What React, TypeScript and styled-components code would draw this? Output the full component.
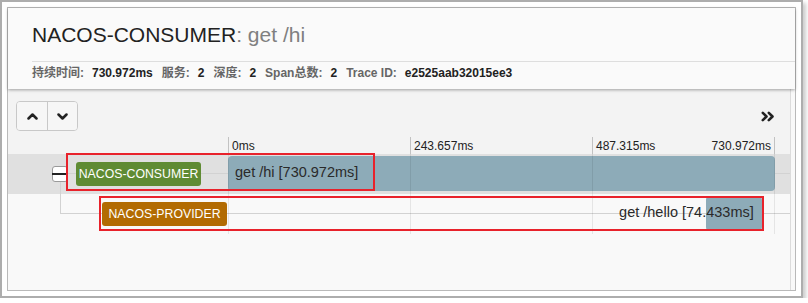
import styled, { createGlobalStyle } from 'styled-components';

const GlobalStyle = createGlobalStyle`
  body {
    margin: 0;
    background: #fff;
    font-family: "Liberation Sans", Arial, "Noto Sans CJK SC", sans-serif;
  }
`;

const TOTAL_MS = 730.972;

type Span = {
  service: string;
  color: string;
  name: string;
  start: number;
  duration: number;
  level: number;
  expandable: boolean;
  labelSide: 'left' | 'right';
};

const spans: Span[] = [
  { service: 'NACOS-CONSUMER', color: '#5f8b33', name: 'get /hi', start: 0, duration: 730.972, level: 0, expandable: true, labelSide: 'left' },
  { service: 'NACOS-PROVIDER', color: '#b26b02', name: 'get /hello', start: 638.8, duration: 74.433, level: 1, expandable: false, labelSide: 'right' },
];

const Frame = styled.div`
  box-sizing: border-box;
  width: 803px;
  height: 298px;
  border: 2px solid #adadad;
  padding: 5px;
  background: #fff;
  box-shadow: 3px 3px 4px rgba(0, 0, 0, 0.2);
`;

const Panel = styled.div`
  box-sizing: border-box;
  height: 100%;
  border: 1px solid #b9b9b9;
  background: #f9f9f9;
  display: flex;
  flex-direction: column;
`;

const Header = styled.header`
  position: relative;
  z-index: 2;
  padding: 15px 0 8px 24px;
  background: #fafafa;
  box-shadow: 0 1px 3px rgba(0, 0, 0, 0.35);
`;

const Title = styled.h1`
  margin: 0;
  font-size: 21px;
  line-height: 24px;
  font-weight: normal;
  color: #222;
`;

const Operation = styled.span`
  color: #808080;
`;

const MetaBar = styled.div`
  margin-top: 14px;
  padding-top: 3px;
  border-top: 1px solid #dedede;
  display: flex;
  gap: 9px;
  font-size: 12px;
  line-height: 16px;
  font-weight: bold;
`;

const MetaItem = styled.div`
  display: flex;
  gap: 8px;
`;

const MetaLabel = styled.span`
  color: #666;
`;

const MetaValue = styled.span`
  color: #222;
`;

const TraceView = styled.div`
  width: 782px;
  flex: 1;
  border-right: 1px solid #dcdcdc;
  display: flex;
  flex-direction: column;
`;

const Toolbar = styled.div`
  height: 48px;
  box-sizing: border-box;
  padding: 12px 15px 0 8px;
  background: #f3f3f3;
  display: flex;
  justify-content: space-between;
  align-items: flex-start;
`;

const ButtonGroup = styled.div`
  display: flex;
  border: 1px solid #c8c8c8;
  border-radius: 4px;
  overflow: hidden;
`;

const NavButton = styled.button`
  width: 30px;
  height: 28px;
  padding: 0;
  border: none;
  background: #f6f6f6;
  display: flex;
  align-items: center;
  justify-content: center;
  & + & {
    border-left: 1px solid #c8c8c8;
  }
`;

const ExpandAll = styled.div`
  height: 30px;
  display: flex;
  align-items: center;
`;

const TimeHeader = styled.div`
  height: 17px;
  background: #f3f3f3;
  display: grid;
  grid-template-columns: 220px 547px 15px;
`;

const Ticks = styled.div`
  display: flex;
`;

const TickCell = styled.div<{ $last?: boolean }>`
  flex: 1;
  box-sizing: border-box;
  border-left: 1px solid #c2c2c2;
  border-right: ${(p) => (p.$last ? '1px solid #c2c2c2' : 'none')};
  padding: 2px 3px 0 3px;
  display: flex;
  justify-content: space-between;
  font-size: 12px;
  line-height: 15px;
  color: #222;
`;

const Rows = styled.div`
  position: relative;
`;

const GridLines = styled.div`
  position: absolute;
  top: 0;
  bottom: 0;
  left: 220px;
  width: 547px;
  display: flex;
  pointer-events: none;
  z-index: 3;
`;

const GridCell = styled.div<{ $last?: boolean }>`
  flex: 1;
  border-left: 1px solid rgba(0, 0, 0, 0.08);
  border-right: ${(p) => (p.$last ? '1px solid rgba(0, 0, 0, 0.08)' : 'none')};
`;

const Row = styled.div<{ $shaded: boolean; $lineStart: number; $level: number }>`
  position: relative;
  height: 40px;
  display: grid;
  grid-template-columns: 220px 547px 15px;
  background: ${(p) => (p.$shaded ? '#e0e0e0' : '#f9f9f9')};

  &::before {
    content: '';
    position: absolute;
    left: ${(p) => p.$lineStart}px;
    right: 0;
    top: 19px;
    height: 1px;
    background: #d2d2d2;
  }

  &::after {
    content: '';
    display: ${(p) => (p.$level > 0 ? 'block' : 'none')};
    position: absolute;
    left: ${(p) => p.$lineStart}px;
    top: -12px;
    width: 1px;
    height: 32px;
    background: #d2d2d2;
  }
`;

const NameCell = styled.div<{ $indent: number }>`
  display: flex;
  align-items: center;
  gap: 8px;
  padding-left: ${(p) => p.$indent}px;
  padding-bottom: 1px;
`;

const Toggle = styled.div`
  position: relative;
  box-sizing: border-box;
  width: 16px;
  height: 16px;
  border: 1px solid #9a9a9a;
  border-radius: 3px;
  background: #fff;
  &::after {
    content: '';
    position: absolute;
    left: -1px;
    right: -1px;
    top: 6px;
    height: 2px;
    background: #222;
  }
`;

const ToggleSpacer = styled.div`
  width: 16px;
  height: 16px;
`;

const ServiceBadge = styled.span<{ $color: string }>`
  position: relative;
  width: 125px;
  height: 24px;
  border-radius: 3px;
  background: ${(p) => p.$color};
  color: #fff;
  font-size: 12.3px;
  line-height: 24px;
  text-align: center;
  white-space: nowrap;
`;

const BarCell = styled.div`
  position: relative;
`;

const Bar = styled.div`
  position: absolute;
  top: 2px;
  height: 35px;
  border-radius: 4px;
  background: #8dabb8;
`;

const BarLabel = styled.span`
  position: absolute;
  top: 0;
  height: 38px;
  line-height: 36px;
  font-size: 14.5px;
  color: #2a2a2a;
  white-space: nowrap;
`;

const Annotation = styled.div<{ $x: number; $y: number; $w: number; $h: number }>`
  position: absolute;
  left: ${(p) => p.$x}px;
  top: ${(p) => p.$y}px;
  width: ${(p) => p.$w}px;
  height: ${(p) => p.$h}px;
  box-sizing: border-box;
  border: 2px solid #e8222b;
  z-index: 4;
  pointer-events: none;
`;

const annotations = [
  { x: 58, y: -1, w: 309, h: 38 },
  { x: 91, y: 2, w: 665, h: 35 },
];

function ChevronUp() {
  return (
    <svg width="11" height="7" viewBox="0 0 11 7">
      <polyline points="1.5,5.5 5.5,1.5 9.5,5.5" fill="none" stroke="#222" strokeWidth="2.5" strokeLinecap="round" strokeLinejoin="round" />
    </svg>
  );
}

function ChevronDown() {
  return (
    <svg width="11" height="7" viewBox="0 0 11 7">
      <polyline points="1.5,1.5 5.5,5.5 9.5,1.5" fill="none" stroke="#222" strokeWidth="2.5" strokeLinecap="round" strokeLinejoin="round" />
    </svg>
  );
}

function DoubleRight() {
  return (
    <svg width="14" height="11" viewBox="0 0 14 11">
      <polyline points="1.8,1.8 5.5,5.5 1.8,9.2" fill="none" stroke="#222" strokeWidth="2.6" strokeLinecap="round" strokeLinejoin="round" />
      <polyline points="7.8,1.8 11.5,5.5 7.8,9.2" fill="none" stroke="#222" strokeWidth="2.6" strokeLinecap="round" strokeLinejoin="round" />
    </svg>
  );
}

export default function App() {
  const ticks = [0, 1, 2].map((i) => ((TOTAL_MS * i) / 3).toFixed(3).replace(/\.000$/, '') + 'ms');

  return (
    <>
      <GlobalStyle />
      <Frame>
        <Panel>
          <Header>
            <Title>
              NACOS-CONSUMER<Operation>: get /hi</Operation>
            </Title>
            <MetaBar>
              <MetaItem>
                <MetaLabel>持续时间:</MetaLabel>
                <MetaValue>730.972ms</MetaValue>
              </MetaItem>
              <MetaItem>
                <MetaLabel>服务:</MetaLabel>
                <MetaValue>2</MetaValue>
              </MetaItem>
              <MetaItem>
                <MetaLabel>深度:</MetaLabel>
                <MetaValue>2</MetaValue>
              </MetaItem>
              <MetaItem>
                <MetaLabel>Span总数:</MetaLabel>
                <MetaValue>2</MetaValue>
              </MetaItem>
              <MetaItem>
                <MetaLabel>Trace ID:</MetaLabel>
                <MetaValue>e2525aab32015ee3</MetaValue>
              </MetaItem>
            </MetaBar>
          </Header>

          <TraceView>
            <Toolbar>
              <ButtonGroup>
                <NavButton>
                  <ChevronUp />
                </NavButton>
                <NavButton>
                  <ChevronDown />
                </NavButton>
              </ButtonGroup>
              <ExpandAll>
                <DoubleRight />
              </ExpandAll>
            </Toolbar>

            <TimeHeader>
              <div />
              <Ticks>
                <TickCell>{ticks[0]}</TickCell>
                <TickCell>{ticks[1]}</TickCell>
                <TickCell $last>
                  <span>{ticks[2]}</span>
                  <span>{TOTAL_MS}ms</span>
                </TickCell>
              </Ticks>
              <div />
            </TimeHeader>

            <Rows>
              <GridLines>
                <GridCell />
                <GridCell />
                <GridCell $last />
              </GridLines>
              {spans.map((s, i) => {
                const indent = 44 + s.level * 26;
                const lineStart = s.level === 0 ? indent : indent - 18;
                const left = (s.start / TOTAL_MS) * 100;
                const width = (s.duration / TOTAL_MS) * 100;
                const labelStyle =
                  s.labelSide === 'left'
                    ? { left: `calc(${left}% + 7px)` }
                    : { right: `calc(${100 - left - width}% + 8px)` };
                const a = annotations[i];
                return (
                  <Row key={s.service} $shaded={i === 0} $lineStart={lineStart} $level={s.level}>
                    <NameCell $indent={indent}>
                      {s.expandable ? <Toggle /> : <ToggleSpacer />}
                      <ServiceBadge $color={s.color}>{s.service}</ServiceBadge>
                    </NameCell>
                    <BarCell>
                      <Bar style={{ left: `${left}%`, width: `${width}%` }} />
                      <BarLabel style={labelStyle}>
                        {s.name} [{s.duration.toFixed(3)}ms]
                      </BarLabel>
                    </BarCell>
                    <div />
                    <Annotation $x={a.x} $y={a.y} $w={a.w} $h={a.h} />
                  </Row>
                );
              })}
            </Rows>
          </TraceView>
        </Panel>
      </Frame>
    </>
  );
}
